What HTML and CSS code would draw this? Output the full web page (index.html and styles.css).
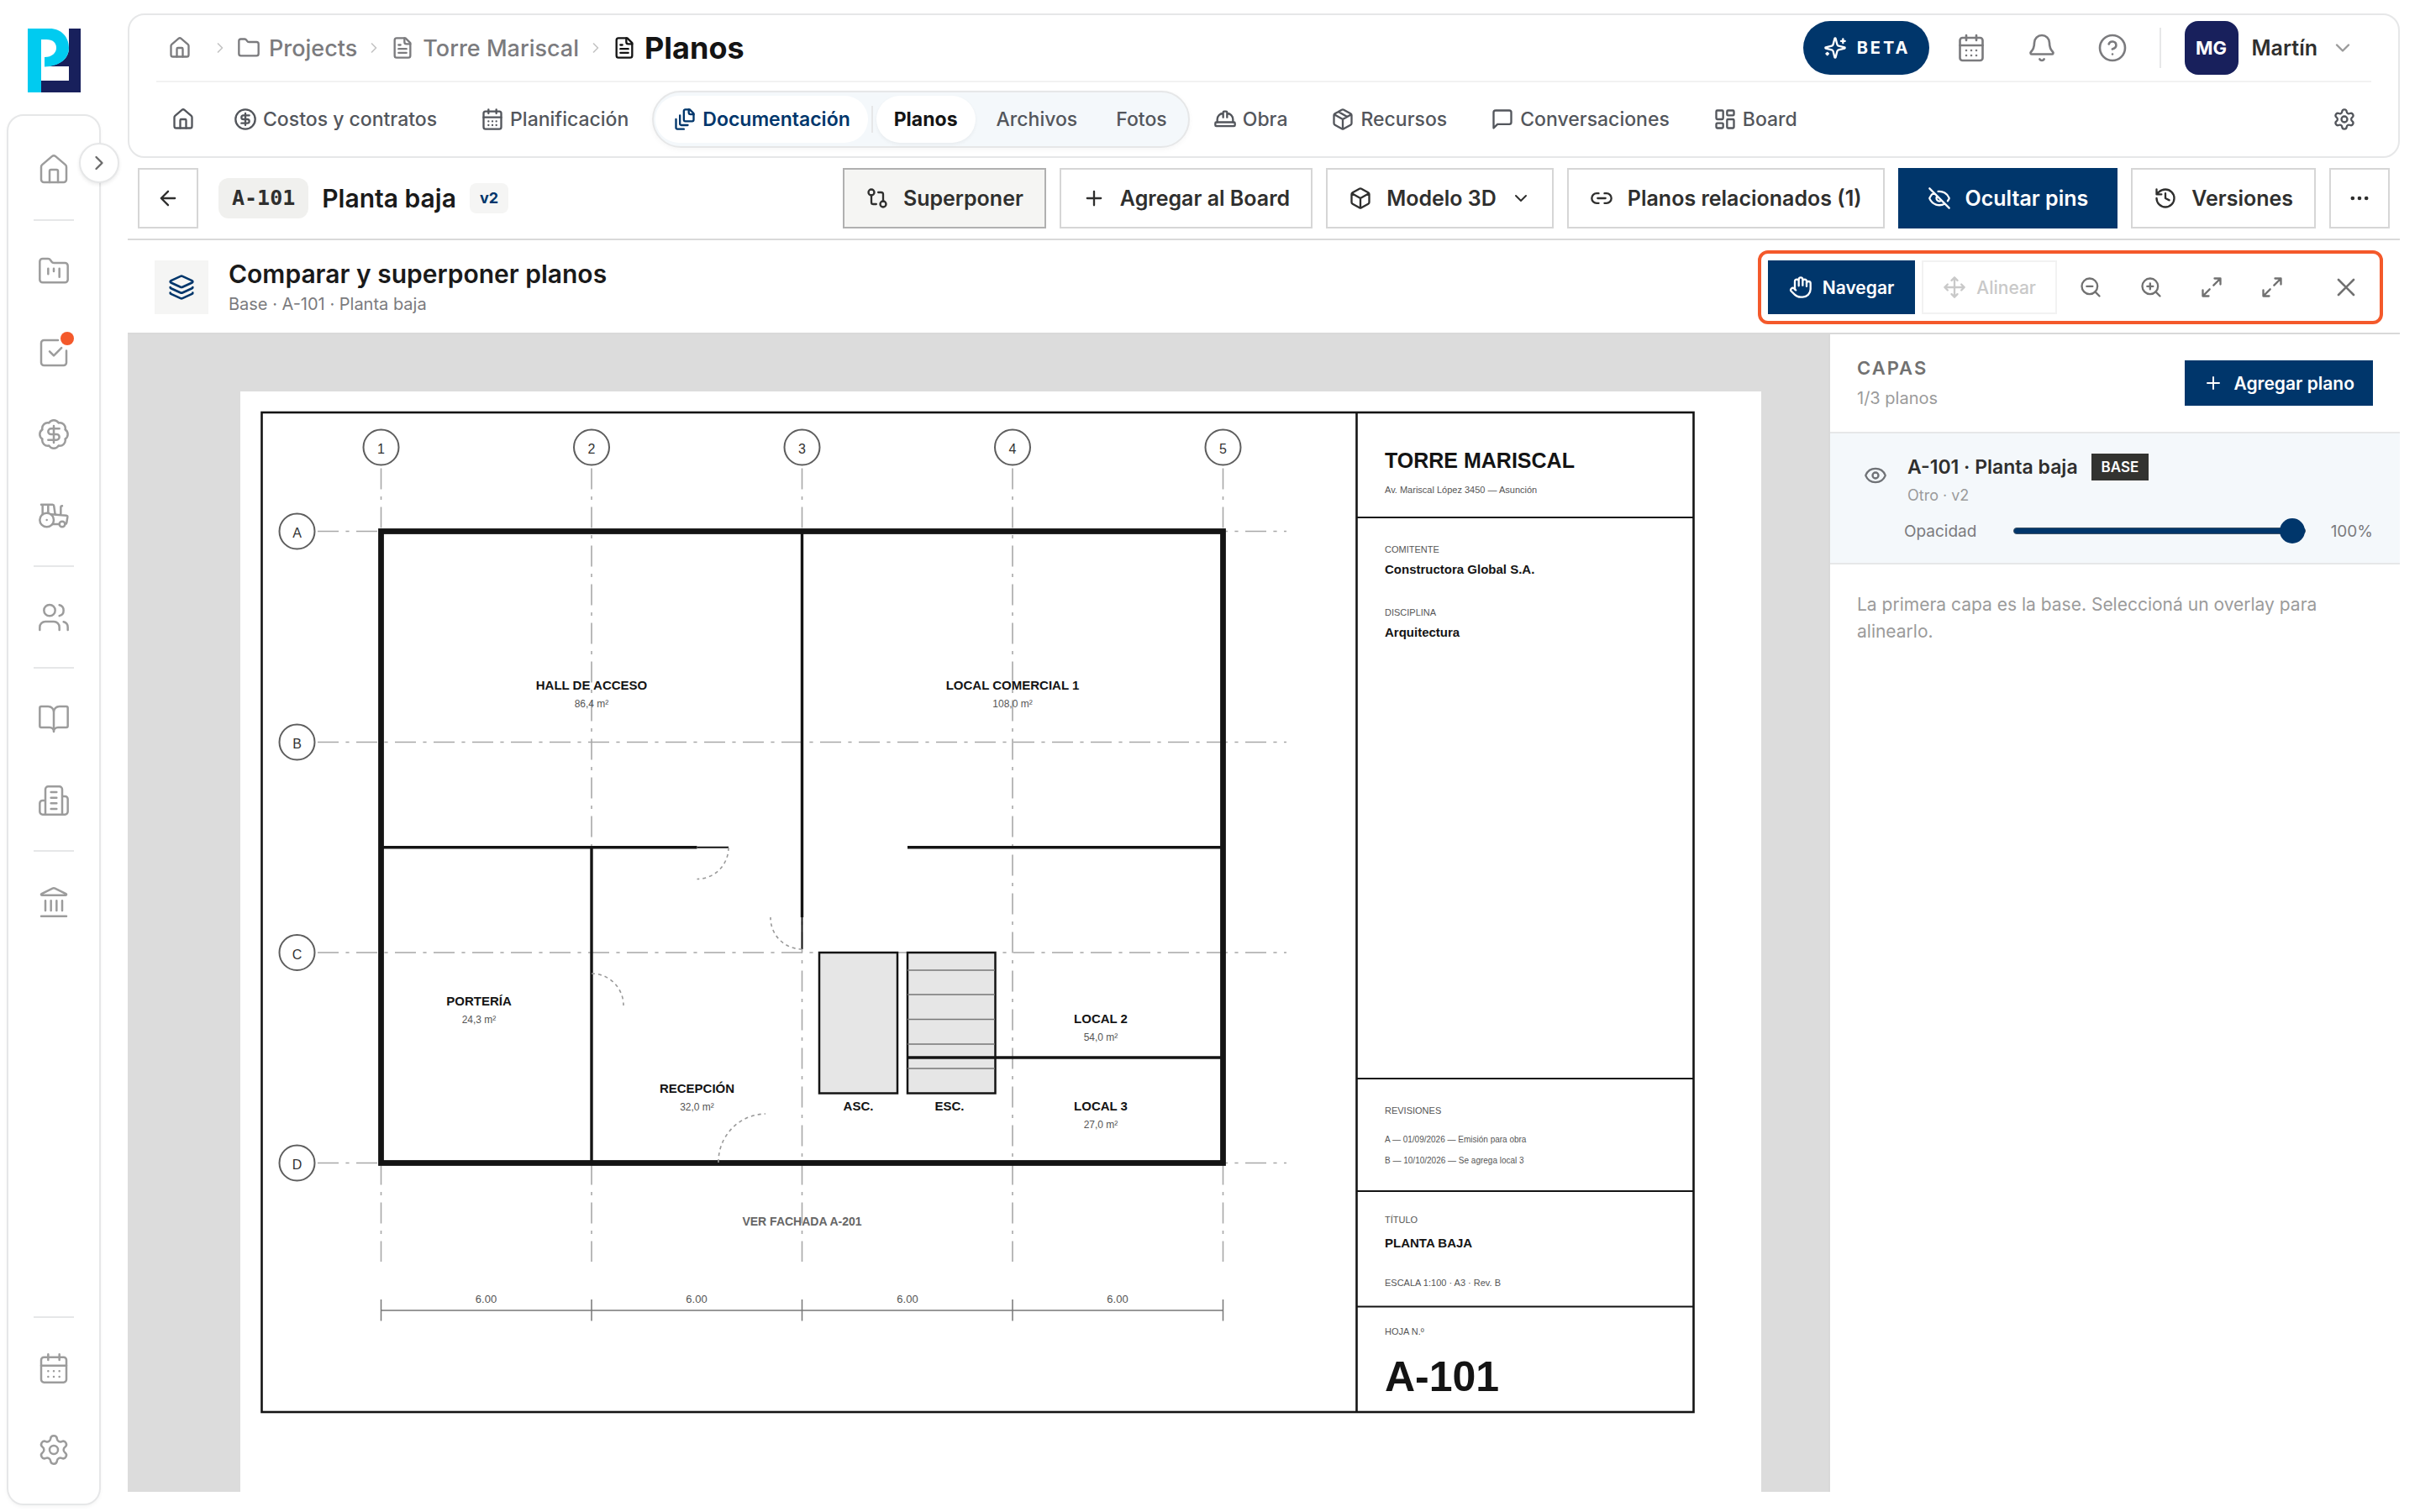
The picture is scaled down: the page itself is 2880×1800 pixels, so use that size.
FILE: index.html
```html
<!DOCTYPE html>
<html lang="es">
<head>
<meta charset="utf-8">
<meta name="viewport" content="width=device-width, initial-scale=1">
<title>Planos · Torre Mariscal</title>
<link rel="stylesheet" href="styles.css">
</head>
<body>
<svg class="sprite" aria-hidden="true">
  <symbol id="i-home" viewBox="0 0 24 24"><path d="M15 21v-8a1 1 0 0 0-1-1h-4a1 1 0 0 0-1 1v8"/><path d="M3 10a2 2 0 0 1 .709-1.528l7-5.999a2 2 0 0 1 2.582 0l7 5.999A2 2 0 0 1 21 10v9a2 2 0 0 1-2 2H5a2 2 0 0 1-2-2z"/></symbol>
  <symbol id="i-folder" viewBox="0 0 24 24"><path d="M20 20a2 2 0 0 0 2-2V8a2 2 0 0 0-2-2h-7.9a2 2 0 0 1-1.69-.9L9.6 3.9A2 2 0 0 0 7.93 3H4a2 2 0 0 0-2 2v13a2 2 0 0 0 2 2Z"/></symbol>
  <symbol id="i-file" viewBox="0 0 24 24"><path d="M15 2H6a2 2 0 0 0-2 2v16a2 2 0 0 0 2 2h12a2 2 0 0 0 2-2V7Z"/><path d="M14 2v4a2 2 0 0 0 2 2h4M10 9H8M16 13H8M16 17H8"/></symbol>
  <symbol id="i-dollar" viewBox="0 0 24 24"><circle cx="12" cy="12" r="10"/><path d="M16 8h-6a2 2 0 1 0 0 4h4a2 2 0 1 1 0 4H8M12 18V6"/></symbol>
  <symbol id="i-calendar" viewBox="0 0 24 24"><path d="M8 2v4M16 2v4M3 10h18M8 14h.01M12 14h.01M16 14h.01M8 18h.01M12 18h.01M16 18h.01"/><rect x="3" y="4" width="18" height="18" rx="2"/></symbol>
  <symbol id="i-stack" viewBox="0 0 24 24"><path d="M21 7h-3a2 2 0 0 1-2-2V2"/><path d="M21 6v6.5c0 .8-.7 1.5-1.5 1.5h-7c-.8 0-1.5-.7-1.5-1.5v-9c0-.8.7-1.5 1.5-1.5H17Z"/><path d="M7 8v8.8c0 .3.2.6.4.8.2.2.5.4.8.4H15"/><path d="M3 12v8.8c0 .3.2.6.4.8.2.2.5.4.8.4H11"/></symbol>
  <symbol id="i-hat" viewBox="0 0 24 24"><path d="M10 10V5a1 1 0 0 1 1-1h2a1 1 0 0 1 1 1v5M14 6a6 6 0 0 1 6 6v3M4 15v-3a6 6 0 0 1 6-6"/><rect x="2" y="15" width="20" height="4" rx="1"/></symbol>
  <symbol id="i-package" viewBox="0 0 24 24"><path d="M11 21.73a2 2 0 0 0 2 0l7-4A2 2 0 0 0 21 16V8a2 2 0 0 0-1-1.73l-7-4a2 2 0 0 0-2 0l-7 4A2 2 0 0 0 3 8v8a2 2 0 0 0 1 1.73zM12 22V12M3.29 7 12 12l8.71-5M7.5 4.27l9 5.15"/></symbol>
  <symbol id="i-box" viewBox="0 0 24 24"><path d="M21 8a2 2 0 0 0-1-1.73l-7-4a2 2 0 0 0-2 0l-7 4A2 2 0 0 0 3 8v8a2 2 0 0 0 1 1.73l7 4a2 2 0 0 0 2 0l7-4A2 2 0 0 0 21 16ZM3.3 7l8.7 5 8.7-5M12 22V12"/></symbol>
  <symbol id="i-message" viewBox="0 0 24 24"><path d="M21 15a2 2 0 0 1-2 2H7l-4 4V5a2 2 0 0 1 2-2h14a2 2 0 0 1 2 2z"/></symbol>
  <symbol id="i-board" viewBox="0 0 24 24"><rect x="3" y="3" width="7" height="9" rx="1"/><rect x="14" y="3" width="7" height="5" rx="1"/><rect x="14" y="12" width="7" height="9" rx="1"/><rect x="3" y="16" width="7" height="5" rx="1"/></symbol>
  <symbol id="i-gear" viewBox="0 0 24 24"><path d="M9.671 4.136a2.34 2.34 0 0 1 4.659 0 2.34 2.34 0 0 0 3.319 1.915 2.34 2.34 0 0 1 2.33 4.033 2.34 2.34 0 0 0 0 3.831 2.34 2.34 0 0 1-2.33 4.033 2.34 2.34 0 0 0-3.319 1.915 2.34 2.34 0 0 1-4.659 0 2.34 2.34 0 0 0-3.32-1.915 2.34 2.34 0 0 1-2.33-4.033 2.34 2.34 0 0 0 0-3.831A2.34 2.34 0 0 1 6.35 6.051a2.34 2.34 0 0 0 3.319-1.915"/><circle cx="12" cy="12" r="3"/></symbol>
  <symbol id="i-sparkles" viewBox="0 0 24 24"><path d="M9.937 15.5A2 2 0 0 0 8.5 14.063l-6.135-1.582a.5.5 0 0 1 0-.962L8.5 9.936A2 2 0 0 0 9.937 8.5l1.582-6.135a.5.5 0 0 1 .963 0L14.063 8.5A2 2 0 0 0 15.5 9.937l6.135 1.581a.5.5 0 0 1 0 .964L15.5 14.063a2 2 0 0 0-1.437 1.437l-1.582 6.135a.5.5 0 0 1-.963 0zM20 3v4M22 5h-4M4 17v2M5 18H3"/></symbol>
  <symbol id="i-bell" viewBox="0 0 24 24"><path d="M10.268 21a2 2 0 0 0 3.464 0M3.262 15.326A1 1 0 0 0 4 17h16a1 1 0 0 0 .74-1.673C19.41 13.956 18 12.499 18 8A6 6 0 0 0 6 8c0 4.499-1.411 5.956-2.738 7.326"/></symbol>
  <symbol id="i-help" viewBox="0 0 24 24"><circle cx="12" cy="12" r="10"/><path d="M9.09 9a3 3 0 0 1 5.83 1c0 2-3 3-3 3M12 17h.01"/></symbol>
  <symbol id="i-compare" viewBox="0 0 24 24"><circle cx="18" cy="18" r="3"/><circle cx="6" cy="6" r="3"/><path d="M13 6h3a2 2 0 0 1 2 2v7M11 18H8a2 2 0 0 1-2-2V9"/></symbol>
  <symbol id="i-link" viewBox="0 0 24 24"><path d="M9 17H7A5 5 0 0 1 7 7h2M15 7h2a5 5 0 1 1 0 10h-2M8 12h8"/></symbol>
  <symbol id="i-eyeoff" viewBox="0 0 24 24"><path d="M10.733 5.076a10.744 10.744 0 0 1 11.205 6.575 1 1 0 0 1 0 .696 10.747 10.747 0 0 1-1.444 2.49M14.084 14.158a3 3 0 0 1-4.242-4.242M17.479 17.499a10.75 10.75 0 0 1-15.417-5.151 1 1 0 0 1 0-.696 10.75 10.75 0 0 1 4.446-5.143M2 2l20 20"/></symbol>
  <symbol id="i-eye" viewBox="0 0 24 24"><path d="M2.062 12.348a1 1 0 0 1 0-.696 10.75 10.75 0 0 1 19.876 0 1 1 0 0 1 0 .696 10.75 10.75 0 0 1-19.876 0"/><circle cx="12" cy="12" r="3"/></symbol>
  <symbol id="i-history" viewBox="0 0 24 24"><path d="M3 12a9 9 0 1 0 9-9 9.75 9.75 0 0 0-6.74 2.74L3 8M3 3v5h5M12 7v5l4 2"/></symbol>
  <symbol id="i-dots" viewBox="0 0 24 24"><circle cx="12" cy="12" r="1"/><circle cx="19" cy="12" r="1"/><circle cx="5" cy="12" r="1"/></symbol>
  <symbol id="i-layers" viewBox="0 0 24 24"><path d="M12.83 2.18a2 2 0 0 0-1.66 0L2.6 6.08a1 1 0 0 0 0 1.83l8.58 3.91a2 2 0 0 0 1.66 0l8.58-3.9a1 1 0 0 0 0-1.83z"/><path d="M2 12a1 1 0 0 0 .58.91l8.6 3.91a2 2 0 0 0 1.65 0l8.58-3.9A1 1 0 0 0 22 12"/><path d="M2 17a1 1 0 0 0 .58.91l8.6 3.91a2 2 0 0 0 1.65 0l8.58-3.9A1 1 0 0 0 22 17"/></symbol>
  <symbol id="i-hand" viewBox="0 0 24 24"><path d="M18 11V6a2 2 0 0 0-4 0M14 10V4a2 2 0 0 0-4 0v2M10 10.500V6a2 2 0 0 0-4 0v8"/><path d="M18 8a2 2 0 1 1 4 0v6a8 8 0 0 1-8 8h-2c-2.800 0-4.500-.86-5.990-2.340l-3.600-3.600a2 2 0 0 1 2.830-2.820L7 15"/></symbol>
  <symbol id="i-move" viewBox="0 0 24 24"><path d="M12 2v20M15 19l-3 3-3-3M19 9l3 3-3 3M2 12h20M5 9l-3 3 3 3M9 5l3-3 3 3"/></symbol>
  <symbol id="i-zoomout" viewBox="0 0 24 24"><circle cx="11" cy="11" r="8"/><path d="M21 21l-4.350-4.350M8 11h6"/></symbol>
  <symbol id="i-zoomin" viewBox="0 0 24 24"><circle cx="11" cy="11" r="8"/><path d="M21 21l-4.350-4.350M8 11h6M11 8v6"/></symbol>
  <symbol id="i-expand" viewBox="0 0 24 24"><path d="M15 3h6v6M21 3l-7 7M3 21l7-7M9 21H3v-6"/></symbol>
  <symbol id="i-x" viewBox="0 0 24 24"><path d="M18 6 6 18M6 6l12 12"/></symbol>
  <symbol id="i-plus" viewBox="0 0 24 24"><path d="M5 12h14M12 5v14"/></symbol>
  <symbol id="i-right" viewBox="0 0 24 24"><path d="m9 18 6-6-6-6"/></symbol>
  <symbol id="i-down" viewBox="0 0 24 24"><path d="m6 9 6 6 6-6"/></symbol>
  <symbol id="i-back" viewBox="0 0 24 24"><path d="m12 19-7-7 7-7M19 12H5"/></symbol>
  <symbol id="i-kanban" viewBox="0 0 24 24"><path d="M4 20h16a2 2 0 0 0 2-2V8a2 2 0 0 0-2-2h-7.930a2 2 0 0 1-1.660-.9l-.82-1.200A2 2 0 0 0 7.930 3H4a2 2 0 0 0-2 2v13c0 1.100.9 2 2 2ZM8 10v4M12 10v2M16 10v6"/></symbol>
  <symbol id="i-check" viewBox="0 0 24 24"><path d="M21 10.500V19a2 2 0 0 1-2 2H5a2 2 0 0 1-2-2V5a2 2 0 0 1 2-2h10M9 11l3 3 5.500-5.500"/></symbol>
  <symbol id="i-badge" viewBox="0 0 24 24"><path d="M3.850 8.620a4 4 0 0 1 4.780-4.770 4 4 0 0 1 6.740 0 4 4 0 0 1 4.780 4.780 4 4 0 0 1 0 6.740 4 4 0 0 1-4.770 4.780 4 4 0 0 1-6.750 0 4 4 0 0 1-4.780-4.770 4 4 0 0 1 0-6.760Z"/><path d="M16 8h-6a2 2 0 1 0 0 4h4a2 2 0 1 1 0 4H8M12 18V6"/></symbol>
  <symbol id="i-tractor" viewBox="0 0 24 24"><path d="m10 11 11 .9a1 1 0 0 1 .8 1.100l-.665 4.158a1 1 0 0 1-.988.842H20M16 18h-5M18 5a1 1 0 0 0-1 1v5.573M3 4h8.129a1 1 0 0 1 .99.863L13 11.246M4 11V4M7 15h.01M8 10.100V4"/><circle cx="18" cy="18" r="2"/><circle cx="7" cy="15" r="5"/></symbol>
  <symbol id="i-users" viewBox="0 0 24 24"><path d="M16 21v-2a4 4 0 0 0-4-4H6a4 4 0 0 0-4 4v2M16 3.128a4 4 0 0 1 0 7.744M22 21v-2a4 4 0 0 0-3-3.870"/><circle cx="9" cy="7" r="4"/></symbol>
  <symbol id="i-book" viewBox="0 0 24 24"><path d="M12 7v14M3 18a1 1 0 0 1-1-1V4a1 1 0 0 1 1-1h5a4 4 0 0 1 4 4 4 4 0 0 1 4-4h5a1 1 0 0 1 1 1v13a1 1 0 0 1-1 1h-6a3 3 0 0 0-3 3 3 3 0 0 0-3-3z"/></symbol>
  <symbol id="i-building" viewBox="0 0 24 24"><path d="M6 22V4a2 2 0 0 1 2-2h8a2 2 0 0 1 2 2v18ZM6 12H4a2 2 0 0 0-2 2v6a2 2 0 0 0 2 2h2M18 9h2a2 2 0 0 1 2 2v9a2 2 0 0 1-2 2h-2M10 6h4M10 10h4M10 14h4M10 18h4"/></symbol>
  <symbol id="i-landmark" viewBox="0 0 24 24"><path d="M10 18v-7M11.120 2.198a2 2 0 0 1 1.760.006l7.866 3.847c.476.233.31.949-.22.949H3.474c-.53 0-.695-.716-.22-.949zM14 18v-7M18 18v-7M3 22h18M6 18v-7"/></symbol>
</svg>

<div class="app">
  <aside class="side">
    <a class="logo" href="#" aria-label="Inicio">
      <svg viewBox="0 0 63 76"><path fill="#18205c" d="M49 0H63V76H16V62H49V45H22C38 44 49 36 49 23Z"/><path fill="#00cbf0" d="M0 0H26C40 0 49 10 49 23S38 45 20 45.500V34C29 34 34 29 34 23S30 13 22 13H16V76H0Z"/></svg>
    </a>
    <nav class="rail" aria-label="Principal">
      <button class="rail-toggle" aria-label="Expandir menú"><svg class="icon"><use href="#i-right"/></svg></button>
      <a href="#" aria-label="Inicio"><svg class="icon"><use href="#i-home"/></svg></a>
      <hr>
      <a href="#" aria-label="Proyectos"><svg class="icon"><use href="#i-kanban"/></svg></a>
      <a href="#" aria-label="Tareas"><svg class="icon"><use href="#i-check"/></svg><span class="dot"></span></a>
      <a href="#" aria-label="Costos"><svg class="icon"><use href="#i-badge"/></svg></a>
      <a href="#" aria-label="Equipos"><svg class="icon"><use href="#i-tractor"/></svg></a>
      <hr>
      <a href="#" aria-label="Personas"><svg class="icon"><use href="#i-users"/></svg></a>
      <hr>
      <a href="#" aria-label="Biblioteca"><svg class="icon"><use href="#i-book"/></svg></a>
      <a href="#" aria-label="Empresas"><svg class="icon"><use href="#i-building"/></svg></a>
      <hr>
      <a href="#" aria-label="Finanzas"><svg class="icon"><use href="#i-landmark"/></svg></a>
      <hr class="push">
      <a href="#" aria-label="Calendario"><svg class="icon"><use href="#i-calendar"/></svg></a>
      <a href="#" aria-label="Configuración"><svg class="icon"><use href="#i-gear"/></svg></a>
    </nav>
  </aside>

  <main class="main">
    <header class="top">
      <div class="top-row">
        <nav class="crumbs" aria-label="Ruta">
          <a class="crumb-home" href="#" aria-label="Inicio"><svg class="icon"><use href="#i-home"/></svg></a>
          <svg class="icon sep"><use href="#i-right"/></svg>
          <a href="#"><svg class="icon"><use href="#i-folder"/></svg>Projects</a>
          <svg class="icon sep"><use href="#i-right"/></svg>
          <a href="#"><svg class="icon"><use href="#i-file"/></svg>Torre Mariscal</a>
          <svg class="icon sep"><use href="#i-right"/></svg>
          <h1><svg class="icon"><use href="#i-file"/></svg>Planos</h1>
        </nav>
        <div class="tools">
          <button class="beta"><svg class="icon"><use href="#i-sparkles"/></svg>BETA</button>
          <button class="tool" aria-label="Calendario"><svg class="icon"><use href="#i-calendar"/></svg></button>
          <button class="tool" aria-label="Notificaciones"><svg class="icon"><use href="#i-bell"/></svg></button>
          <button class="tool" aria-label="Ayuda"><svg class="icon"><use href="#i-help"/></svg></button>
          <button class="user"><span class="avatar">MG</span>Martín<svg class="icon"><use href="#i-down"/></svg></button>
        </div>
      </div>
      <nav class="tabs" aria-label="Proyecto">
        <a href="#" aria-label="Resumen"><svg class="icon"><use href="#i-home"/></svg></a>
        <a href="#"><svg class="icon"><use href="#i-dollar"/></svg>Costos y contratos</a>
        <a href="#"><svg class="icon"><use href="#i-calendar"/></svg>Planificación</a>
        <div class="group">
          <a class="group-main" href="#"><svg class="icon"><use href="#i-stack"/></svg>Documentación</a>
          <span class="bar"></span>
          <a class="current" href="#" aria-current="page">Planos</a>
          <a href="#">Archivos</a>
          <a href="#">Fotos</a>
        </div>
        <a href="#"><svg class="icon"><use href="#i-hat"/></svg>Obra</a>
        <a href="#"><svg class="icon"><use href="#i-package"/></svg>Recursos</a>
        <a href="#"><svg class="icon"><use href="#i-message"/></svg>Conversaciones</a>
        <a href="#"><svg class="icon"><use href="#i-board"/></svg>Board</a>
        <a class="tabs-end" href="#" aria-label="Configuración"><svg class="icon"><use href="#i-gear"/></svg></a>
      </nav>
    </header>

    <section class="toolbar">
      <button class="btn square" aria-label="Volver"><svg class="icon"><use href="#i-back"/></svg></button>
      <div class="sheet-name"><span class="code">A-101</span><h2>Planta baja</h2><span class="version">v2</span></div>
      <div class="actions">
        <button class="btn pressed"><svg class="icon"><use href="#i-compare"/></svg>Superponer</button>
        <button class="btn"><svg class="icon"><use href="#i-plus"/></svg>Agregar al Board</button>
        <button class="btn"><svg class="icon"><use href="#i-box"/></svg>Modelo 3D<svg class="icon caret"><use href="#i-down"/></svg></button>
        <button class="btn"><svg class="icon"><use href="#i-link"/></svg>Planos relacionados (1)</button>
        <button class="btn primary"><svg class="icon"><use href="#i-eyeoff"/></svg>Ocultar pins</button>
        <button class="btn"><svg class="icon"><use href="#i-history"/></svg>Versiones</button>
        <button class="btn square" aria-label="Más opciones"><svg class="icon"><use href="#i-dots"/></svg></button>
      </div>
    </section>

    <section class="compare">
      <span class="compare-icon"><svg class="icon"><use href="#i-layers"/></svg></span>
      <div class="compare-text"><h2>Comparar y superponer planos</h2><p>Base · A-101 · Planta baja</p></div>
      <div class="modes">
        <button class="mode on"><svg class="icon"><use href="#i-hand"/></svg>Navegar</button>
        <button class="mode off" disabled><svg class="icon"><use href="#i-move"/></svg>Alinear</button>
        <button class="mini" aria-label="Alejar"><svg class="icon"><use href="#i-zoomout"/></svg></button>
        <button class="mini" aria-label="Acercar"><svg class="icon"><use href="#i-zoomin"/></svg></button>
        <button class="mini" aria-label="Ajustar"><svg class="icon"><use href="#i-expand"/></svg></button>
        <button class="mini" aria-label="Pantalla completa"><svg class="icon"><use href="#i-expand"/></svg></button>
        <button class="mini close" aria-label="Cerrar"><svg class="icon"><use href="#i-x"/></svg></button>
      </div>
    </section>

    <div class="work">
      <div class="canvas">
        <svg class="paper" viewBox="286 466 1810 1310" role="img" aria-label="Plano A-101 Planta baja">
          <g class="axes">
            <path d="M453.500 557.500V1502M704 557.500V1502M954.500 557.500V1502M1205 557.500V1502M1455.500 557.500V1502"/>
            <path d="M378 632.500H1531M378 883.500H1531M378 1134H1531M378 1384.500H1531"/>
          </g>
          <g class="bubbles">
            <circle cx="453.500" cy="532.500" r="21"/><circle cx="704" cy="532.500" r="21"/><circle cx="954.500" cy="532.500" r="21"/><circle cx="1205" cy="532.500" r="21"/><circle cx="1455.500" cy="532.500" r="21"/>
            <circle cx="353.500" cy="632.500" r="21"/><circle cx="353.500" cy="883.500" r="21"/><circle cx="353.500" cy="1134" r="21"/><circle cx="353.500" cy="1384.500" r="21"/>
          </g>
          <g class="t16 mid marks">
            <text x="453.500" y="540">1</text><text x="704" y="540">2</text><text x="954.500" y="540">3</text><text x="1205" y="540">4</text><text x="1455.500" y="540">5</text>
            <text x="353.500" y="640">A</text><text x="353.500" y="891">B</text><text x="353.500" y="1142">C</text><text x="353.500" y="1392">D</text>
          </g>
          <g class="cores"><rect x="975" y="1134" width="93" height="167.500"/><rect x="1080" y="1134" width="104.500" height="167.500"/></g>
          <path class="steps" d="M1080 1155h104M1080 1184h104M1080 1213.500h104M1080 1243h104M1080 1272h104"/>
          <g class="walls">
            <path d="M453.500 1008.700H829.500M1080 1008.700H1455M1080 1259H1455M704 1008.700V1384M954.500 632V1092"/>
            <path class="leaf" d="M829.500 1008.700H867M954.500 1092V1130"/>
            <rect class="outer" x="453.500" y="632.500" width="1002" height="752"/>
          </g>
          <path class="swing" d="M867 1009A37.500 37.500 0 0 1 829.500 1046.500M954.500 1130A37.500 37.500 0 0 1 917 1092M704 1159A38 38 0 0 1 742 1197M855 1384A57 57 0 0 1 911 1326"/>
          <path class="dims" d="M453.500 1560H1455.500M453.500 1547V1572.500M704 1547V1572.500M954.500 1547V1572.500M1205 1547V1572.500M1455.500 1547V1572.500"/>
          <g class="t13 mid soft"><text x="578.500" y="1551">6.00</text><text x="829" y="1551">6.00</text><text x="1080" y="1551">6.00</text><text x="1330" y="1551">6.00</text></g>
          <g class="t15 mid strong">
            <text x="704" y="821">HALL DE ACCESO</text><text x="1205" y="821">LOCAL COMERCIAL 1</text><text x="570" y="1197">PORTERÍA</text><text x="829.500" y="1301">RECEPCIÓN</text><text x="1310" y="1218">LOCAL 2</text><text x="1310" y="1322">LOCAL 3</text><text x="1021.500" y="1322">ASC.</text><text x="1130" y="1322">ESC.</text>
          </g>
          <g class="t12 mid soft">
            <text x="704" y="842">86,4 m²</text><text x="1205" y="842">108,0 m²</text><text x="570" y="1218">24,3 m²</text><text x="829.500" y="1322">32,0 m²</text><text x="1310" y="1239">54,0 m²</text><text x="1310" y="1343">27,0 m²</text>
          </g>
          <text class="t14 mid note" x="954.500" y="1459">VER FACHADA A-201</text>
          <rect class="frame" x="311.500" y="491" width="1704" height="1190"/>
          <path class="frame" d="M1614.500 491V1681"/>
          <path class="rule" d="M1614.500 616H2015.500M1614.500 1284H2015.500M1614.500 1418H2015.500M1614.500 1555.500H2015.500"/>
          <g class="strong">
            <text class="t25" x="1648" y="557">TORRE MARISCAL</text><text class="t15" x="1648" y="683">Constructora Global S.A.</text><text class="t15" x="1648" y="758">Arquitectura</text><text class="t15" x="1648" y="1485">PLANTA BAJA</text><text class="t50" x="1648" y="1656">A-101</text>
          </g>
          <g class="t11 soft">
            <text x="1648" y="587">Av. Mariscal López 3450 — Asunción</text><text x="1648" y="658">COMITENTE</text><text x="1648" y="733">DISCIPLINA</text><text x="1648" y="1326">REVISIONES</text><text class="t10" x="1648" y="1360">A — 01/09/2026 — Emisión para obra</text><text class="t10" x="1648" y="1385">B — 10/10/2026 — Se agrega local 3</text><text x="1648" y="1456">TÍTULO</text><text x="1648" y="1531">ESCALA 1:100 · A3 · Rev. B</text><text x="1648" y="1589">HOJA N.º</text>
          </g>
        </svg>
      </div>

      <aside class="panel">
        <div class="panel-head">
          <div><h3>CAPAS</h3><p>1/3 planos</p></div>
          <button class="add"><svg class="icon"><use href="#i-plus"/></svg>Agregar plano</button>
        </div>
        <div class="layer">
          <div class="layer-top">
            <button class="layer-eye" aria-label="Mostrar capa"><svg class="icon"><use href="#i-eye"/></svg></button>
            <div>
              <div class="layer-name"><strong>A-101 · Planta baja</strong><span class="base">BASE</span></div>
              <p>Otro · v2</p>
            </div>
          </div>
          <div class="opacity"><label for="opacity">Opacidad</label><input id="opacity" type="range" min="0" max="100" value="100"><output for="opacity">100%</output></div>
        </div>
        <p class="hint">La primera capa es la base. Seleccioná un overlay para alinearlo.</p>
      </aside>
    </div>
  </main>
</div>
</body>
</html>
```
FILE: styles.css
```css
:root {
  --navy: #00366b;
  --ink: #1a1a1a;
  --text: #2f2f2e;
  --muted: #7b7b7e;
  --faint: #9b9b9b;
  --line: #d9d9d9;
  --line-soft: #e6e7e8;
  --accent: #f4592b;
}
* { box-sizing: border-box; }
body { margin: 0; background: #fff; color: var(--text); font-family: Inter, "Noto Sans", sans-serif; }
h1, h2, h3, p { margin: 0; }
a { color: inherit; text-decoration: none; }
button { margin: 0; padding: 0; border: 0; background: none; color: inherit; font: inherit; white-space: nowrap; }
.sprite { display: none; }
.icon { display: block; flex: none; width: 28px; height: 28px; fill: none; stroke: currentColor; stroke-width: 2; stroke-linecap: round; stroke-linejoin: round; }

.app { display: flex; gap: 32px; min-height: 100vh; padding-left: 8px; }

/* Side rail */
.side { display: flex; flex-direction: column; flex: none; width: 112px; padding: 34px 0 8px; }
.logo { align-self: center; width: 63px; height: 76px; }
.logo svg { display: block; width: 100%; }
.rail { position: relative; display: flex; flex: 1; flex-direction: column; align-items: center; gap: 16px; margin-top: 26px; padding: 23px 0 24px; border: 2px solid var(--line-soft); border-radius: 20px; box-shadow: 0 2px 4px rgba(0, 0, 0, .04); color: #9c9c9c; }
.rail a { position: relative; display: grid; place-items: center; width: 80px; height: 81px; }
.rail .icon { width: 40px; height: 40px; stroke-width: 1.5; }
.rail hr { width: 48px; height: 2px; margin: 3px 0; border: 0; background: var(--line-soft); }
.rail .push { margin-top: auto; }
.dot { position: absolute; top: 16px; right: 16px; width: 16px; height: 16px; border-radius: 50%; background: var(--accent); }
.rail .rail-toggle { position: absolute; top: 32px; right: -24px; z-index: 1; display: grid; place-items: center; width: 48px; height: 48px; border: 2px solid var(--line-soft); border-radius: 50%; background: #fff; box-shadow: 0 2px 4px rgba(0, 0, 0, .08); color: #6a6a6a; }
.rail .rail-toggle .icon { width: 28px; height: 28px; stroke-width: 2; }

/* Header */
.main { display: flex; flex: 1; flex-direction: column; min-width: 0; padding: 16px 24px 24px 0; }
.top { flex: none; padding: 0 32px; border: 2px solid var(--line-soft); border-radius: 20px; }
.top-row { display: flex; align-items: center; justify-content: space-between; height: 80px; padding: 0 20px 0 14px; border-bottom: 2px solid #f2f2f2; }
.crumbs { display: flex; align-items: center; gap: 10px; color: var(--muted); font-size: 27px; font-weight: 500; }
.crumbs a, .crumbs h1 { display: flex; align-items: center; gap: 10px; }
.crumbs .crumb-home { margin-right: 14px; }
.crumbs .sep { width: 20px; height: 20px; color: #c4c4c4; }
.crumbs h1 { color: #141414; font-size: 36px; font-weight: 700; line-height: 40px; }
.tools { display: flex; align-items: center; gap: 16px; color: var(--muted); }
.beta { display: flex; align-items: center; gap: 12px; height: 64px; padding: 0 22px 0 24px; border-radius: 32px; background: var(--navy); color: #fff; font-size: 20px; font-weight: 700; letter-spacing: 3px; }
.tool { display: grid; place-items: center; width: 68px; height: 64px; }
.tool .icon { width: 36px; height: 36px; stroke-width: 1.75; }
.user { display: flex; align-items: center; gap: 16px; margin-left: 6px; color: var(--text); font-size: 25px; font-weight: 600; }
.user::before { width: 2px; height: 48px; margin-right: 12px; background: var(--line-soft); content: ""; }
.user .icon { color: #9a9a9a; }
.avatar { display: grid; place-items: center; width: 64px; height: 64px; border-radius: 16px; background: #18205c; color: #fff; font-size: 22px; font-weight: 700; }

.tabs { display: flex; align-items: center; gap: 4px; height: 88px; color: #53565c; font-size: 23px; font-weight: 500; }
.tabs a { display: flex; align-items: center; gap: 7px; height: 56px; padding: 0 24px; border-radius: 28px; white-space: nowrap; }
.tabs > a:first-child { padding: 0 18px; }
.tabs .tabs-end { margin-left: auto; padding-right: 18px; }
.group { display: flex; align-items: center; gap: 4px; height: 68px; padding: 0 4px 0 2px; border: 2px solid var(--line-soft); border-radius: 34px; background: #f4f8fb; box-shadow: 0 2px 6px rgba(0, 0, 0, .04); }
.group a { padding: 0 21px; }
.group .group-main { background: #fff; color: var(--navy); font-weight: 600; }
.group .current { background: #fff; box-shadow: 0 2px 4px rgba(0, 0, 0, .05); color: #141414; font-weight: 700; }
.bar { width: 2px; height: 32px; background: var(--line-soft); }

/* Sheet toolbar */
.toolbar { display: flex; flex: none; align-items: center; gap: 24px; padding: 12px; border-bottom: 2px solid var(--line); }
.sheet-name { display: flex; align-items: center; gap: 16px; }
.sheet-name h2 { color: var(--ink); font-size: 30px; font-weight: 600; white-space: nowrap; }
.code { padding: 0 16px; border-radius: 12px; background: #f0f0ee; font: 700 25px/48px "DejaVu Sans Mono", "Liberation Mono", monospace; }
.version { padding: 0 12px; border-radius: 8px; background: #f5f5f4; color: var(--navy); font-size: 18px; font-weight: 700; line-height: 36px; }
.actions { display: flex; gap: 16px; margin-left: auto; }
.btn { display: flex; align-items: center; justify-content: center; gap: 17px; height: 72px; padding: 0 25px; border: 2px solid #d6d6d6; background: #fff; color: var(--text); font-size: 25px; font-weight: 600; }
.btn.square { width: 72px; padding: 0; }
.btn.pressed { border-color: #b0b0b0; background: #f5f5f3; }
.btn.primary { padding: 0 33px; border-color: var(--navy); background: var(--navy); color: #fff; }
.btn .caret { width: 24px; height: 24px; }

/* Compare bar */
.compare { display: flex; flex: none; align-items: center; gap: 24px; padding: 12px 20px 10px 32px; border-bottom: 2px solid var(--line); }
.compare-icon { display: grid; place-items: center; width: 64px; height: 64px; background: #f5f5f4; color: var(--navy); }
.compare-icon .icon { width: 32px; height: 32px; }
.compare h2 { color: var(--ink); font-size: 30px; font-weight: 600; line-height: 40px; }
.compare p { color: var(--muted); font-size: 20px; line-height: 32px; }
.modes { display: flex; gap: 8px; margin-left: auto; padding: 8px; border: 4px solid var(--accent); border-radius: 12px; color: #717171; }
.mode { display: flex; align-items: center; gap: 12px; height: 64px; padding: 0 25px; font-size: 21px; font-weight: 600; }
.mode.on { background: var(--navy); color: #fff; }
.mode.off { padding: 0 23px; border: 2px solid #f2f2f2; color: #c9c9c9; font-weight: 500; }
.mini { display: grid; place-items: center; width: 64px; height: 64px; }
.mini.close { margin-left: 16px; }
.mini.close .icon { width: 36px; height: 36px; stroke-width: 1.75; }

/* Drawing and layers */
.work { display: flex; flex: 1; min-height: 0; }
.canvas { flex: 1; min-width: 0; padding: 68px 80px 0 134px; overflow: hidden; background: #dcdcdc; }
.paper { display: block; width: 100%; background: #fff; font-family: "Liberation Sans", Arial, sans-serif; }
.paper path, .paper rect, .paper circle { fill: none; stroke: #141414; }
.paper .axes path { stroke: #a8a8a8; stroke-width: 1.600; stroke-dasharray: 25 8.400 4.200 8.400; }
.paper .bubbles circle { fill: #fff; stroke: #5e5e5e; stroke-width: 2; }
.paper .cores rect { fill: #e6e6e6; stroke-width: 2.500; }
.paper .steps { stroke: #777; stroke-width: 1.500; }
.paper .walls path { stroke-width: 3.400; }
.paper .walls .leaf { stroke-width: 2; }
.paper .walls .outer { stroke-width: 6.800; }
.paper .swing { stroke: #999; stroke-width: 1.600; stroke-dasharray: 4 4; }
.paper .dims { stroke: #777; stroke-width: 1.500; }
.paper .frame { stroke-width: 2.600; }
.paper .rule { stroke-width: 2; }
.mid { text-anchor: middle; }
.soft { fill: #555; }
.marks { fill: #333; }
.strong { fill: #141414; font-weight: 700; }
.note { fill: #666; font-weight: 700; }
.t10 { font-size: 10px; }
.t11 { font-size: 11px; }
.t12 { font-size: 12px; }
.t13 { font-size: 13px; }
.t14 { font-size: 14px; }
.t15 { font-size: 15px; }
.t16 { font-size: 16px; }
.t25 { font-size: 25px; }
.t50 { font-size: 50px; }

.panel { flex: none; width: 680px; border-left: 2px solid var(--line); }
.panel-head { display: flex; align-items: center; justify-content: space-between; height: 118px; padding: 0 32px; border-bottom: 2px solid var(--line-soft); }
.panel h3 { color: #717171; font-size: 22px; font-weight: 600; letter-spacing: 2px; line-height: 36px; }
.panel-head p { color: var(--faint); font-size: 20px; line-height: 36px; }
.add { display: flex; align-items: center; gap: 12px; height: 54px; padding: 0 22px; background: var(--navy); color: #fff; font-size: 21px; font-weight: 600; }
.add .icon { width: 24px; height: 24px; }
.layer { padding: 24px 32px 20px; border-bottom: 2px solid var(--line-soft); background: #f4f8fb; }
.layer-top { display: flex; gap: 16px; }
.layer-eye { display: grid; place-items: center; width: 44px; height: 52px; color: #6f7276; }
.layer-name { display: flex; align-items: center; gap: 16px; height: 32px; }
.layer-name strong { font-size: 23px; font-weight: 600; }
.base { padding: 0 12px; background: #333330; color: #fff; font-size: 17px; font-weight: 600; line-height: 32px; }
.layer p { margin-top: 4px; color: var(--faint); font-size: 18px; line-height: 28px; }
.opacity { display: flex; align-items: center; gap: 30px; height: 36px; margin-top: 10px; padding-left: 56px; color: var(--muted); font-size: 19px; }
.opacity label { width: 100px; }
.opacity input { flex: 1; min-width: 0; height: 30px; margin: 0; background: none; -webkit-appearance: none; appearance: none; }
.opacity input::-webkit-slider-runnable-track { height: 8px; border: 1px solid #3d5266; border-radius: 4px; background: var(--navy); }
.opacity input::-webkit-slider-thumb { width: 30px; height: 30px; margin-top: -12px; border-radius: 50%; background: var(--navy); -webkit-appearance: none; appearance: none; }
.hint { padding: 32px; color: var(--faint); font-size: 21px; line-height: 32px; }
```
